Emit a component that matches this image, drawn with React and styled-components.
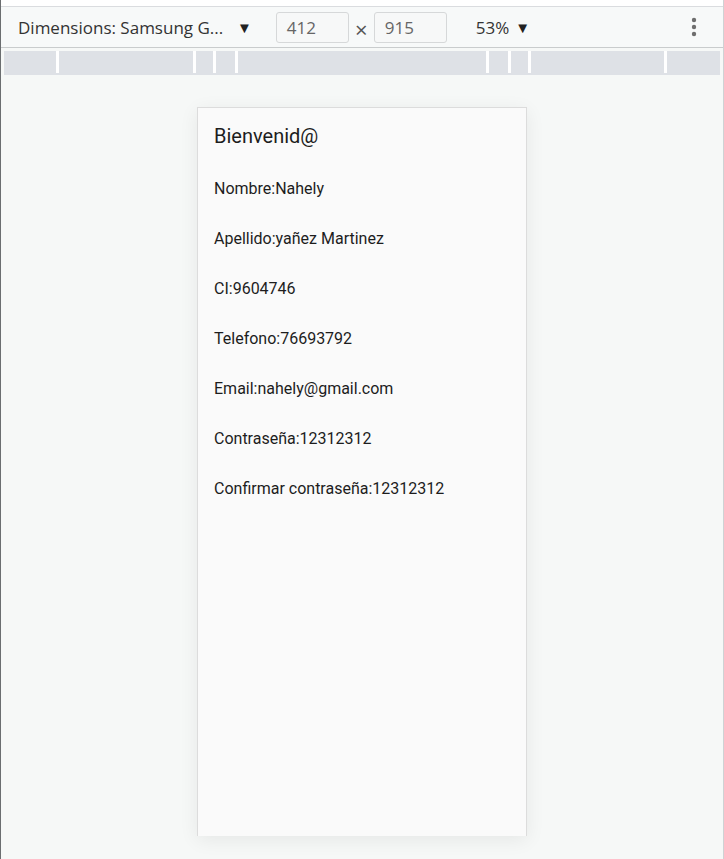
import React from "react";
import styled, { createGlobalStyle } from "styled-components";

const Global = createGlobalStyle`
  html, body { margin: 0; padding: 0; }
  body { background: #f6f8f7; font-family: Roboto, "Noto Sans", sans-serif; }
`;

const Frame = styled.div`
  width: 724px;
  height: 859px;
  box-sizing: border-box;
  border-left: 1px solid #6b6e70;
  border-right: 1px solid #cfd2d4;
  display: flex;
  flex-direction: column;
  background: #f6f8f7;
  overflow: hidden;
`;

const TopGap = styled.div`
  height: 6px;
  background: #ffffff;
  border-bottom: 1px solid #dadcdf;
  flex: none;
`;

const Toolbar = styled.div`
  height: 40px;
  flex: none;
  background: #f7f9f9;
  border-bottom: 1px solid #c9cccd;
  display: flex;
  align-items: center;
  padding-left: 17px;
  padding-right: 26px;
  font-family: "Open Sans", "Noto Sans", sans-serif;
  font-size: 17px;
  color: #333;
`;

const DeviceLabel = styled.span`
  white-space: nowrap;
  width: 218px;
  flex: none;
`;

const Caret = styled.span`
  font-size: 15px;
  margin-left: ${p => p.$ml || 0}px;
  color: #222;
  flex: none;
`;

const NumBox = styled.div`
  width: 73px;
  height: 31px;
  box-sizing: border-box;
  border: 1px solid #d6d8d9;
  border-radius: 3px;
  background: #f7f8f8;
  color: #666;
  display: flex;
  align-items: center;
  padding-left: 10px;
  margin-left: ${p => p.$ml || 0}px;
  flex: none;
`;

const Times = styled.span`
  width: 25px;
  text-align: center;
  color: #555;
  font-size: 22px;
  line-height: 1;
  padding-top: 4px;
  flex: none;
`;

const Zoom = styled.span`
  margin-left: 29px;
  color: #333;
  flex: none;
`;

const Spacer = styled.div`
  flex: 1;
`;

const Kebab = styled.svg`
  display: block;
  flex: none;
`;

const RulerWrap = styled.div`
  margin: 3px 3px 0 3px;
  display: flex;
  flex-direction: column;
  flex: none;
`;

const RulerRow = styled.div`
  display: flex;
  gap: 3px;
  height: 22px;
  background: #ffffff;
`;

const Segment = styled.div`
  width: ${p => p.$w}px;
  background: #dee1e6;
  flex: none;
`;

const RulerStrip = styled.div`
  height: 2px;
  background: #dee1e6;
`;

const Stage = styled.div`
  flex: 1;
  display: flex;
  justify-content: center;
  padding-top: 32px;
`;

const Card = styled.div`
  width: 330px;
  height: 729px;
  box-sizing: border-box;
  background: #fafafa;
  border: 1px solid #dcdcdc;
  border-bottom: none;
  box-shadow: 0 4px 18px rgba(0, 0, 0, 0.07);
  padding: 16px 16px;
  display: flex;
  flex-direction: column;
`;

const Title = styled.div`
  font-family: Roboto, sans-serif;
  font-size: 20px;
  line-height: 24px;
  color: #1d1d1d;
  margin-bottom: 16px;
`;

const Field = styled.div`
  font-family: Roboto, sans-serif;
  font-size: 16px;
  line-height: 50px;
  height: 50px;
  color: #1d1d1d;
  white-space: nowrap;
`;

const segments = [52, 134, 17, 19, 248, 19, 17, 133, 53];

const fields = [
  "Nombre:Nahely",
  "Apellido:yañez Martinez",
  "CI:9604746",
  "Telefono:76693792",
  "Email:nahely@gmail.com",
  "Contraseña:12312312",
  "Confirmar contraseña:12312312",
];

export default function App() {
  return (
    <>
      <Global />
      <Frame>
        <TopGap />
        <Toolbar>
          <DeviceLabel>Dimensions: Samsung G...</DeviceLabel>
          <Caret $ml={1}>▼</Caret>
          <NumBox $ml={24}>412</NumBox>
          <Times>×</Times>
          <NumBox>915</NumBox>
          <Zoom>53%</Zoom>
          <Caret $ml={6}>▼</Caret>
          <Spacer />
          <Kebab width="6" height="22" viewBox="0 0 6 22">
            <circle cx="3" cy="4" r="2.2" fill="#6e6e6e" />
            <circle cx="3" cy="11" r="2.2" fill="#6e6e6e" />
            <circle cx="3" cy="18" r="2.2" fill="#6e6e6e" />
          </Kebab>
        </Toolbar>
        <RulerWrap>
          <RulerRow>
            {segments.map((w, i) => (
              <Segment key={i} $w={w} />
            ))}
          </RulerRow>
          <RulerStrip />
        </RulerWrap>
        <Stage>
          <Card>
            <Title>Bienvenid@</Title>
            {fields.map(f => (
              <Field key={f}>{f}</Field>
            ))}
          </Card>
        </Stage>
      </Frame>
    </>
  );
}
